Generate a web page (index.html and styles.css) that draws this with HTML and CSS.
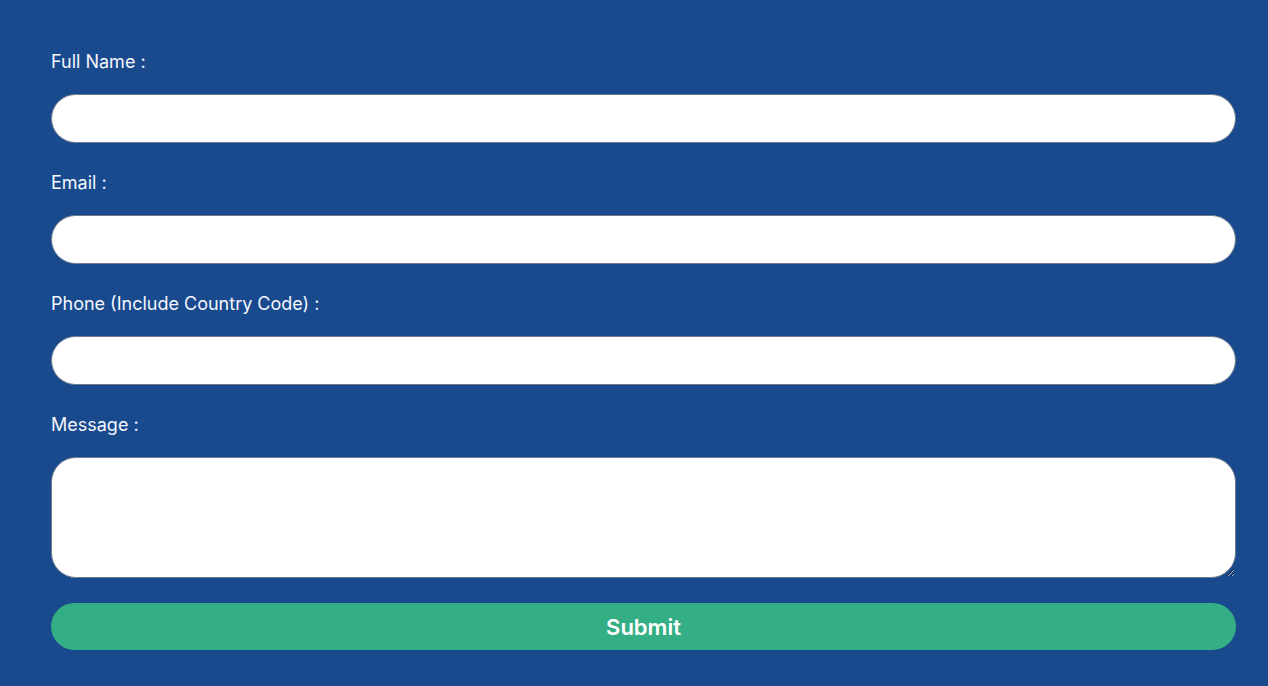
FILE: index.html
```html
<!DOCTYPE html>
<html lang="en">
  <head>
    <meta charset="UTF-8" />
    <meta name="viewport" content="width=device-width, initial-scale=1.0" />
    <title>Contact</title>
    <link rel="stylesheet" href="styles.css">
  </head>
  <body>
    <form id="contactForm" class="contact-form">
      <div class="field">
        <label for="fullName">Full Name :</label>
        <input type="text" id="fullName" name="fullName" />
      </div>

      <div class="field">
        <label for="email">Email :</label>
        <input type="email" id="email" name="email" />
      </div>

      <div class="field">
        <label for="phone">Phone (Include Country Code) :</label>
        <input type="tel" id="phone" name="phone" />
      </div>

      <div class="field field-message">
        <label for="message">Message :</label>
        <textarea id="message" name="message"></textarea>
      </div>

      <button type="submit">Submit</button>
    </form>
  </body>
</html>
```

FILE: styles.css
```css
body {
  font-family: Inter, "Noto Sans", sans-serif;
  margin: 0;
  background-color: #1a4a8e;
  min-height: 100vh;
}
.contact-form {
  display: flex;
  flex-direction: column;
  padding: 50px 32px 0 51px;
}
.field {
  display: flex;
  flex-direction: column;
  margin-bottom: 28px;
}
.field-message {
  margin-bottom: 25px;
}
label {
  color: #f3f6fb;
  font-size: 18px;
  line-height: 22px;
  padding-top: 1px;
  margin-bottom: 21px;
}
input,
textarea {
  box-sizing: border-box;
  width: 100%;
  height: 49px;
  padding: 10px 20px;
  border: 1px solid #6f7b8c;
  border-radius: 25px;
  background-color: #fff;
  font-family: inherit;
  font-size: 16px;
}
textarea {
  height: 121px;
  resize: vertical;
}
button {
  height: 47px;
  border: none;
  border-radius: 24px;
  background-color: #34af85;
  color: #fff;
  font-family: inherit;
  font-size: 22px;
  font-weight: 600;
  cursor: pointer;
}
```
